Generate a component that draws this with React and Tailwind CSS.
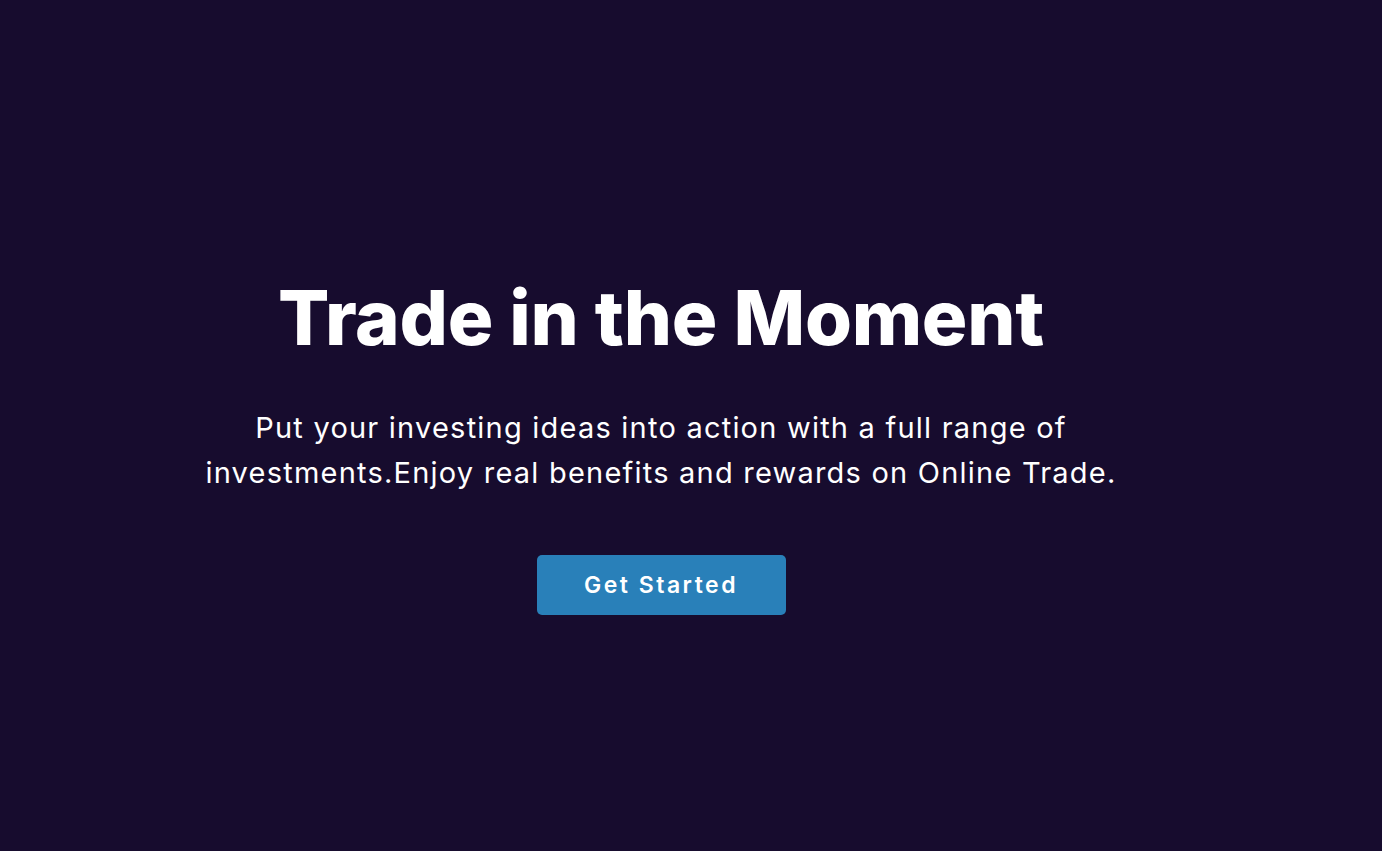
export default function App() {
  return (
    <div className="w-full h-[851px] bg-[#170c2e] flex flex-col items-center pr-[60px] pt-[270px] text-white">
      <h1 className="font-['Inter',sans-serif] font-extrabold text-[76px] leading-[94px] tracking-[-0.3px] text-center">
        Trade in the Moment
      </h1>
      <p className="mt-[41px] font-['Inter',sans-serif] text-[29px] leading-[45px] tracking-[1.22px] text-center w-[960px]">
        Put your investing ideas into action with a full range of investments.Enjoy real benefits and rewards on Online Trade.
      </p>
      <button className="mt-[60px] w-[249px] h-[60px] rounded-[5px] bg-[#2980b9] font-['Inter',sans-serif] font-semibold text-[23px] tracking-[2.5px] text-white">
        Get Started
      </button>
    </div>
  );
}
